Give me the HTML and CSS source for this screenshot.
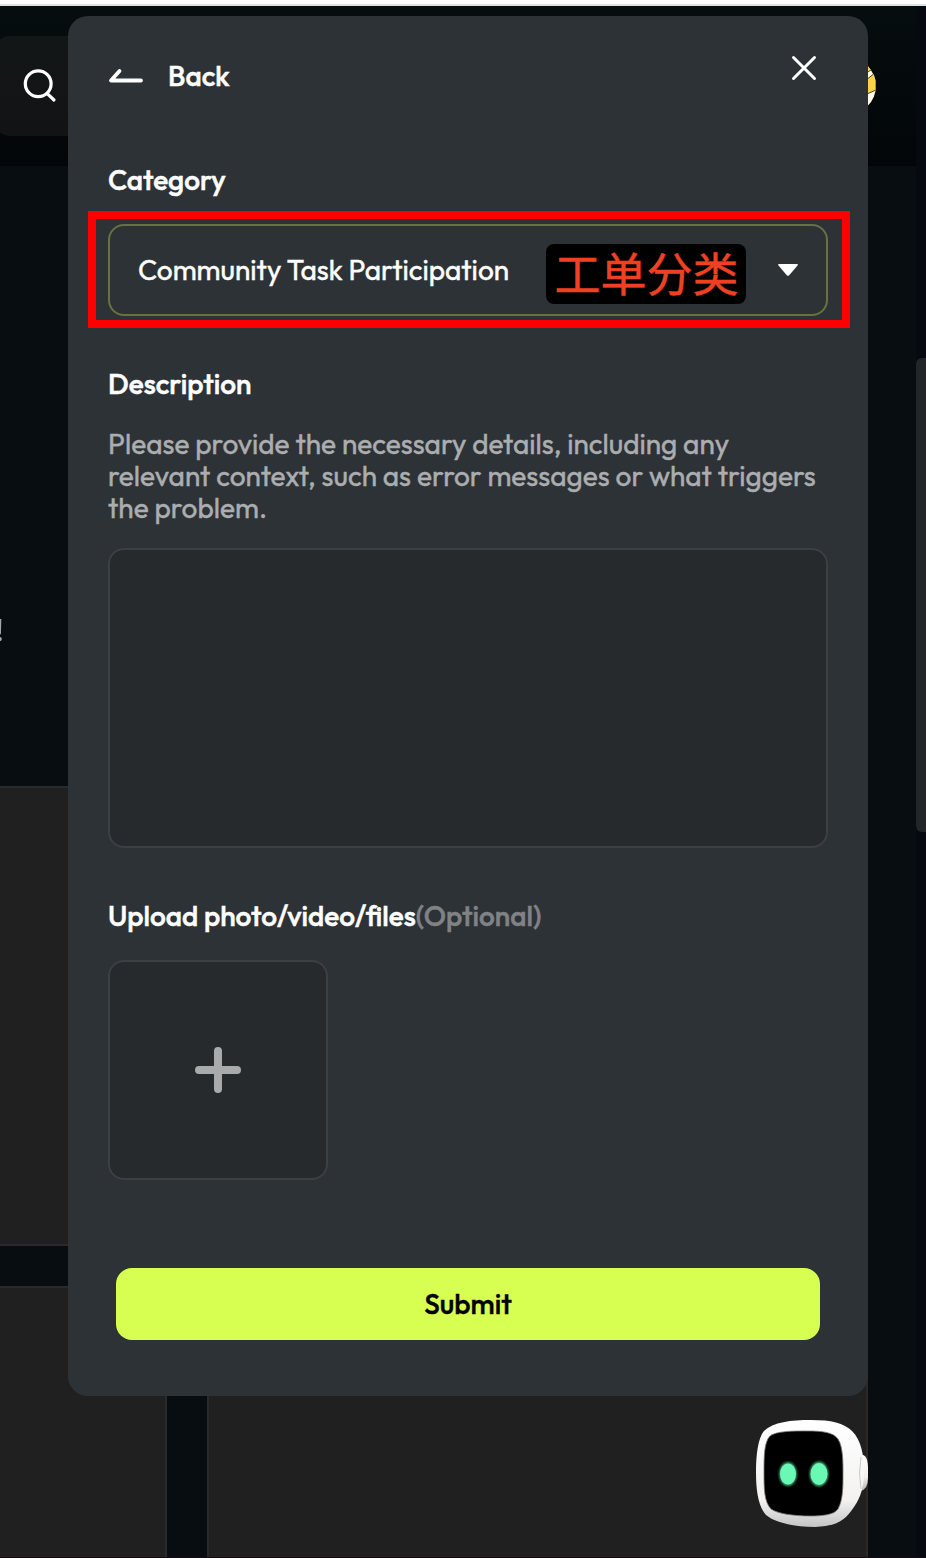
FILE: index.html
```html
<!DOCTYPE html>
<html lang="en">
<head>
<meta charset="utf-8">
<title>Submit a ticket</title>
<link rel="stylesheet" href="styles.css">
</head>
<body>
<div class="screen">
  <div class="page">
    <header class="topbar">
      <div class="search">
        <svg width="36" height="36" viewBox="0 0 36 36" fill="none" stroke="#fff" stroke-width="3.2" stroke-linecap="round"><circle cx="16.200" cy="15.800" r="12.900"/><path d="M25.500 25.800l6.500 6.200"/></svg>
      </div>
      <svg class="avatar" width="56" height="56" viewBox="0 0 56 56"><defs><clipPath id="av"><circle cx="28" cy="28" r="28"/></clipPath></defs><g clip-path="url(#av)"><path fill="#fffde8" d="M0 0h56v56H0z"/><path d="M40 0h16v8l-12 9zM40 27l16-13v18l-16 7z" fill="#fbd24b" stroke="#4b421c" stroke-width="1"/></g></svg>
    </header>
    <section class="hero"><p class="hero-text">!</p></section>
    <section class="cards">
      <article class="card"></article><article class="card"></article>
      <article class="card"></article><article class="card"></article>
    </section>
  </div>
  <div class="scrollbar"><div class="thumb"></div></div>

  <main class="modal">
    <div class="modal-head">
      <svg class="arrow" width="36" height="16" viewBox="0 0 36 16" fill="none" stroke="#fff" stroke-width="3.800" stroke-linecap="round" stroke-linejoin="round"><path d="M11.500 4L3 13.500h30"/></svg>
      <span class="back">Back</span>
      <svg class="close" width="28" height="28" viewBox="0 0 28 28" fill="none" stroke="#fff" stroke-width="3" stroke-linecap="round"><path d="M3.500 3.500l21 21m0-21l-21 21"/></svg>
    </div>
    <h2 class="label label-category">Category</h2>
    <div class="highlight">
      <div class="select">
        <span class="value">Community Task Participation</span>
        <span class="tag">工单分类</span>
        <svg class="caret" width="20" height="12" viewBox="0 0 20 12"><path d="M1 0h18q1.500.3.5 1.600l-8.300 9.700q-1.200 1-2.400 0L.5 1.600Q-.5.300 1 0z" fill="#fff"/></svg>
      </div>
    </div>
    <h2 class="label label-description">Description</h2>
    <p class="hint">Please provide the necessary details, including any<br>relevant context, such as error messages or what triggers<br>the problem.</p>
    <div class="textarea"></div>
    <h2 class="label label-upload">Upload photo/video/files<span class="optional">(Optional)</span></h2>
    <div class="upload">
      <svg width="46" height="46" viewBox="0 0 46 46" stroke="#a9aaab" stroke-width="8" stroke-linecap="round"><path d="M23 4v38M4 23h38"/></svg>
    </div>
    <button class="submit">Submit</button>
  </main>

  <svg class="robot" width="114" height="110" viewBox="0 0 114 110">
    <defs>
      <linearGradient id="shell" x1="0" y1="0" x2="0" y2="1"><stop offset="0" stop-color="#fff"/><stop offset=".75" stop-color="#f3f2f1"/><stop offset="1" stop-color="#c4c4c4"/></linearGradient>
      <linearGradient id="ear" x1="0" y1="0" x2="0" y2="1"><stop offset="0" stop-color="#fff"/><stop offset=".6" stop-color="#f0f0ef"/><stop offset="1" stop-color="#b5b5b5"/></linearGradient>
      <filter id="soft" x="-30%" y="-30%" width="160%" height="160%"><feGaussianBlur stdDeviation="1"/></filter>
      <filter id="edge"><feGaussianBlur stdDeviation=".7"/></filter>
    </defs>
    <path d="M105 37q8-2 8 14v9q0 12-8 13z" fill="url(#ear)"/>
    <path d="M56 2C76 2 89 5 97 13 106 22 109 36 109 54 109 68 106 79 99 89 91 101 84 108 60 109 38 109 19 104 11 97 3 88 1 72 1 54 1 37 3 20 9 13 18 4 36 2 56 2z" fill="url(#shell)"/>
    <path d="M106 39q-3 16 0 32" fill="none" stroke="#c9c9c8" stroke-width="1"/>
    <path d="M52 13C67 13 78 14 83 21 88 29 88 43 88 56 88 69 88 82 83 91 79 97 67 98 55 98 40 98 23 96 16 91 9 84 9 70 9 54 9 39 9 24 15 18 22 13 37 13 52 13z" fill="#000" stroke="#777" stroke-width=".8" filter="url(#edge)"/>
    <g fill="#69f9b4"><g filter="url(#soft)" opacity=".65"><ellipse cx="33" cy="56" rx="9" ry="12"/><ellipse cx="64" cy="56" rx="9.500" ry="12.500"/></g><ellipse cx="33" cy="56" rx="8" ry="10.500"/><ellipse cx="64" cy="56" rx="8.500" ry="11"/></g>
  </svg>
</div>
</body>
</html>
```
FILE: styles.css
```css
* { box-sizing: border-box; margin: 0; padding: 0; }
body { background: #070d10; font-family: Outfit, Lato, "Noto Sans CJK SC", sans-serif; color: #fff; }
.screen { position: relative; display: flex; width: 926px; height: 1558px; overflow: hidden; border-top: 4px solid #fff; border-bottom: 1px solid #170912; }
.page { width: 916px; border-top: 2px solid #dfe3e3; overflow: hidden; }
.topbar { display: flex; justify-content: space-between; align-items: center; height: 160px; padding-right: 40px; background: linear-gradient(#060d0e, #020608); }
.search { display: flex; align-items: center; width: 300px; height: 100px; margin-left: -6px; padding: 0 0 1px 28px; border-radius: 16px; background: linear-gradient(#121617, #131314); }
.hero { height: 620px; padding-top: 446px; }
.hero-text { margin-left: -4px; font-size: 30px; line-height: 36px; color: #a5a8a9; will-change: transform; }
.cards { display: grid; grid-template-columns: 661px 661px; grid-template-rows: 460px 460px; gap: 40px; margin-left: -494px; }
.card { background: #202020; border: 2px solid #2a2a2a; }
.scrollbar { width: 10px; padding-top: 352px; border-top: 2px solid #dfe3e3; background: #060a10; }
.thumb { height: 474px; background: #222628; border-radius: 6px 0 0 6px; }

.modal { position: absolute; left: 68px; top: 12px; display: flex; flex-direction: column; width: 800px; height: 1380px; padding: 0 20px; border-radius: 20px; background: #2d3236; }
.modal-head { display: flex; align-items: flex-start; height: 128px; padding: 0 30px 0 20px; }
.arrow { margin-top: 51px; }
.back { margin: 42px 0 0 24px; font-size: 28px; line-height: 36px; font-weight: 500; -webkit-text-stroke: .5px; }
.close { margin: 38px 0 0 auto; }
.label { padding-left: 20px; font-size: 28px; line-height: 36px; font-weight: 500; white-space: nowrap; -webkit-text-stroke: .5px; }
.label-category { margin-top: 18px; }
.highlight { width: 762px; height: 117px; margin-top: 13px; padding: 5px 12px; border: 8px solid #f00; flex: none; }
.select { display: flex; align-items: center; width: 720px; height: 92px; padding: 0 28px; border: 2px solid #667340; border-radius: 16px; }
.value { width: 408px; font-size: 28px; line-height: 36px; white-space: nowrap; -webkit-text-stroke: .4px; }
.tag { display: flex; align-items: center; justify-content: center; width: 200px; height: 60px; margin-top: 8px; padding: 0 0 6px 1px; border-radius: 8px; background: #000; color: #f04023; font-family: "Noto Sans CJK SC", sans-serif; font-size: 46px; line-height: 54px; -webkit-text-stroke: .5px; }
.caret { margin-left: 32px; }
.label-description { margin-top: 38px; }
.hint { height: 96px; margin-top: 26px; padding-left: 20px; font-size: 28px; line-height: 32px; white-space: nowrap; color: #abadaf; -webkit-text-stroke: .4px; }
.textarea { flex: none; width: 720px; height: 300px; margin: 24px 0 0 20px; border: 2px solid #3d4042; border-radius: 16px; background: #272a2c; }
.label-upload { margin-top: 50px; }
.optional { color: #808385; }
.upload { display: flex; align-items: center; justify-content: center; width: 220px; height: 220px; margin: 26px 0 0 20px; border: 2px solid #3d4042; border-radius: 16px; background: #272a2c; }
.submit { width: 704px; height: 72px; margin: 88px 0 0 28px; border: 0; border-radius: 16px; background: #d6ff52; color: #000; font: 500 28px/36px Outfit, Lato, sans-serif; -webkit-text-stroke: .4px; }
.robot { position: absolute; left: 755px; top: 1414px; }
```
